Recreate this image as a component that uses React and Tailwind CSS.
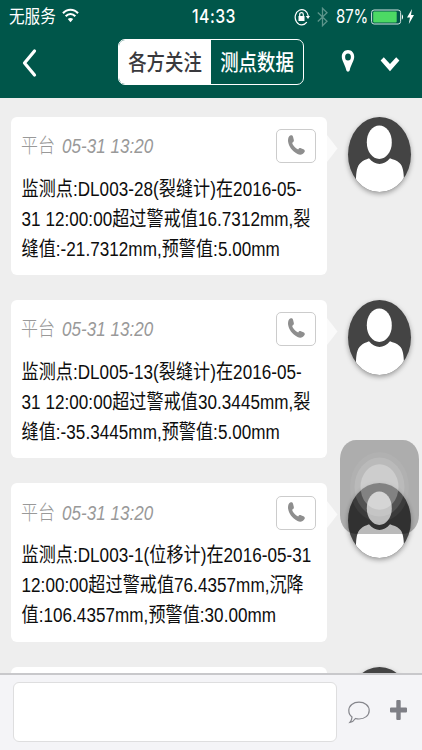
const messages = [
  {
    id: 1,
    sender: '平台',
    time: '05-31 13:20',
    lines: ['监测点:DL003-28(裂缝计)在2016-05-', '31 12:00:00超过警戒值16.7312mm,裂', '缝值:-21.7312mm,预警值:5.00mm'],
  },
  {
    id: 2,
    sender: '平台',
    time: '05-31 13:20',
    lines: ['监测点:DL005-13(裂缝计)在2016-05-', '31 12:00:00超过警戒值30.3445mm,裂', '缝值:-35.3445mm,预警值:5.00mm'],
  },
  {
    id: 3,
    sender: '平台',
    time: '05-31 13:20',
    lines: ['监测点:DL003-1(位移计)在2016-05-31', '12:00:00超过警戒值76.4357mm,沉降', '值:106.4357mm,预警值:30.00mm'],
  },
  { id: 4, sender: '', time: '', lines: [] },
]

function StatusBar() {
  return (
    <div className="flex h-8 items-center pl-[9px] pr-[7px] pt-px">
      <div className="flex w-[183px] items-center gap-1.5">
        <span className="scale-y-[1.15] whitespace-nowrap text-[15.6px] leading-5">无服务</span>
        <svg className="-mt-0.5 h-[15px] w-[17px]" viewBox="0 0 17 15" preserveAspectRatio="none" fill="none" stroke="currentColor" strokeWidth="2.1">
          <path d="M1 5.2C5 .6 12 .6 16 5.2M3.7 8.3C6.4 5.3 10.6 5.3 13.3 8.3" />
          <path d="M8.5 14.2L5.8 11.1C7.2 9.7 9.8 9.7 11.2 11.1Z" fill="currentColor" stroke="none" />
        </svg>
      </div>
      <span className="w-[102px] origin-left scale-y-[1.17] whitespace-nowrap font-['Inter','Liberation_Sans',sans-serif] text-[15.8px] font-medium leading-5 tracking-[0.5px]">14:33</span>
      <svg className="h-[18px] w-4 shrink-0" viewBox="0 0 16 18" fill="none" stroke="currentColor" strokeWidth="1.2">
        <path d="M12.8 14.2A6.6 7.6 0 1 1 14.3 8" />
        <path d="M11.8 8H16L14 11Z" fill="currentColor" stroke="none" />
        <rect x="4.5" y="8" width="6" height="5" fill="currentColor" stroke="none" />
        <path d="M5.7 8V6.4C5.7 3.9 9.3 3.9 9.3 6.4V8" />
      </svg>
      <svg className="ml-[7px] h-5 w-[11px] shrink-0 text-[#5c958b]" viewBox="0 0 11 20" fill="none" stroke="currentColor" strokeWidth="1.3">
        <path d="M.8 5.5L10 14.3L5.5 18.7V1.3L10 5.7L.8 14.5" />
      </svg>
      <span className="ml-2 w-[35px] shrink-0 origin-left scale-y-[1.2] whitespace-nowrap font-['Inter','Liberation_Sans',sans-serif] text-[15px] leading-5 tracking-[-0.1px]">87%</span>
      <svg className="h-4 w-[33px] shrink-0" viewBox="0 0 33 16" fill="none">
        <rect x=".6" y="1" width="29" height="14" rx="2.5" stroke="#d5e5e2" />
        <rect x="2.2" y="2.6" width="23.5" height="10.8" rx="1" fill="#4cd964" />
        <path d="M30.8 5.5C32.5 6 32.5 10 30.8 10.5Z" fill="#fff" />
      </svg>
      <svg className="ml-[3px] h-[15px] w-[7px] shrink-0" viewBox="0 0 7 15" fill="currentColor">
        <path d="M5 0L0 8.5H3L1.8 15L7 6H4Z" />
      </svg>
    </div>
  )
}

function NavBar() {
  return (
    <nav className="flex h-[66px] items-start pl-[22px] pr-[21px] pt-[7px]">
      <button className="mt-[9px] h-[30px] w-4">
        <svg className="h-[30px] w-4" viewBox="0 0 16 30" fill="none" stroke="currentColor" strokeWidth="3.2" strokeLinecap="round" strokeLinejoin="round">
          <path d="M12.5 3L2.5 15L12.5 27" />
        </svg>
      </button>
      <div className="ml-20 flex h-[46px] w-[186px] overflow-hidden rounded-[7px] border border-white text-[18.4px] font-medium leading-[46px]">
        <button className="w-[92px] bg-white text-[#39393d]">
          <span className="block scale-y-[1.15] whitespace-nowrap">各方关注</span>
        </button>
        <button className="flex-1">
          <span className="block scale-y-[1.15] whitespace-nowrap">测点数据</span>
        </button>
      </div>
      <svg className="ml-[37px] mt-[11px] h-[22px] w-[14px]" viewBox="0 0 14 22" fill="currentColor" fillRule="evenodd">
        <path d="M7 0C3.3 0 .8 2.8.8 6.8C.8 11 4 14.2 5.3 20.3C5.7 22.2 8.3 22.2 8.7 20.3C10 14.2 13.2 11 13.2 6.8C13.2 2.8 10.7 0 7 0ZM7 3.6A2.9 3.5 0 1 1 7 10.6A2.9 3.5 0 1 1 7 3.6Z" />
      </svg>
      <svg className="ml-[25px] mt-[17px] h-4 w-5" viewBox="0 0 20 16" fill="currentColor">
        <path d="M.6 4.6L3.8 1.2L10 7.9L16.2 1.2L19.4 4.6L10 15.2Z" />
      </svg>
    </nav>
  )
}

function Avatar() {
  return (
    <div className="ml-[21px] h-[75px] w-[63px] overflow-hidden rounded-[50%] bg-[#444] shadow-[0_2px_5px_rgba(0,0,0,0.35)]">
      <svg className="h-[75px] w-[63px]" viewBox="0 0 63 75" fill="#fff">
        <ellipse cx="31.3" cy="25.2" rx="12.5" ry="16.8" />
        <path d="M8 64C8 55 9 49 12.5 46C15 43.5 18 42.5 21 41.3C24 45 28 47 31.5 47C35 47 39 45 42 41.3C45 42.5 49 43.5 51.5 46C55 49 55.8 55 56 64V75H8Z" />
      </svg>
    </div>
  )
}

function Message({ message }) {
  return (
    <li className="flex h-[158.4px] shrink-0 items-start">
      <div className="relative h-full w-[316px] rounded-md bg-white px-[11px] pt-3">
        {message.lines.length > 0 && (
          <>
            <div className="flex h-[35px] items-center justify-between">
              <p className="mt-0.5 flex scale-y-[1.19] gap-[7px] whitespace-nowrap text-[17px] leading-5 text-[#999]">
                <span className="-ml-px font-light">{message.sender}</span>
                <em className="italic tracking-[0.05px]">{message.time}</em>
              </p>
              <button className="flex h-[34px] w-10 justify-center rounded-[5px] border border-[#ccc] pt-[5px]">
                <svg className="h-5 w-[17px]" viewBox="0 0 50 59" preserveAspectRatio="none" fill="#8e8e8e">
                  <path d="M8 1C12 0 14 2 15 6L17 14C18 18 16 21 12 23C14 31 21 38 30 43C32 39 35 38 38 39L47 43C50 45 50 48 48 51C44 58 36 60 28 56C12 48 2 34 0 18C0 9 2 3 8 1Z" />
                </svg>
              </button>
            </div>
            <div className="-ml-[0.5px] mt-[11px] h-[90px]">
              <p className="origin-top scale-y-[1.19] whitespace-nowrap text-[17.1px] leading-[25.1px] tracking-[0.04px] text-[#0d0d0d] [font-kerning:none]">
                {message.lines.map((line) => (
                  <span key={line} className="block">{line}</span>
                ))}
              </p>
            </div>
          </>
        )}
        <svg className="absolute left-full top-[18px] h-[27px] w-[11px]" viewBox="0 0 11 27" fill="#fafafa">
          <path d="M0 0L10.5 13.5L0 27Z" />
        </svg>
      </div>
      <Avatar />
    </li>
  )
}

function InputBar() {
  return (
    <footer className="flex h-[77px] items-start border-t-2 border-[#c8c8cb] bg-[#f4f4f7] pl-[13px] pt-[7px]">
      <input className="h-[60px] w-[324px] rounded-md border border-[#dededf] bg-white px-3 outline-none" />
      <svg className="ml-[11px] mt-[19px] h-[23px] w-[22px]" viewBox="0 0 22 23" fill="none" stroke="#85868c" strokeWidth="1.2">
        <path d="M11 1.2C16.7 1.2 21.2 4.7 21.2 9.6C21.2 14.5 16.7 18 11 18C9.6 18 8.5 17.8 7.4 17.5C6.2 19.5 4.2 21 1.9 21.4C3.2 19.9 3.9 18.3 4 16.1C2 14.6.8 12.3.8 9.6C.8 4.7 5.3 1.2 11 1.2Z" />
      </svg>
      <svg className="ml-5 mt-[18px] h-5 w-[17px]" viewBox="0 0 17 20" fill="#7e7f86">
        <path d="M7.3 0H9.7Q10.7 0 10.7 1V7.5H16Q17 7.5 17 8.5V11.5Q17 12.5 16 12.5H10.7V19Q10.7 20 9.7 20H7.3Q6.3 20 6.3 19V12.5H1Q0 12.5 0 11.5V8.5Q0 7.5 1 7.5H6.3V1Q6.3 0 7.3 0Z" />
      </svg>
    </footer>
  )
}

function AssistiveTouch() {
  return (
    <div className="absolute left-[340px] top-[440px] h-[94px] w-[79px] overflow-hidden rounded-[16px/19px] bg-black/27">
      <svg className="h-[94px] w-[79px]" viewBox="0 0 79 94" fill="#fff">
        <ellipse cx="39.5" cy="47" rx="29.5" ry="35" fillOpacity=".05" />
        <ellipse cx="39.5" cy="47" rx="25" ry="29.5" fillOpacity=".12" />
        <ellipse cx="39.5" cy="47" rx="19" ry="22.8" fillOpacity=".28" />
      </svg>
    </div>
  )
}

export default function App() {
  return (
    <div className="relative flex h-[750px] w-[422px] flex-col overflow-hidden bg-[#eee] font-['Liberation_Sans','Noto_Sans_CJK_SC',sans-serif]">
      <header className="h-[98px] shrink-0 bg-[#00564a] text-white">
        <StatusBar />
        <NavBar />
      </header>
      <ul className="flex h-[575px] shrink-0 flex-col gap-[25px] overflow-hidden pl-[11px] pt-[18.6px]">
        {messages.map((message) => (
          <Message key={message.id} message={message} />
        ))}
      </ul>
      <InputBar />
      <AssistiveTouch />
    </div>
  )
}
